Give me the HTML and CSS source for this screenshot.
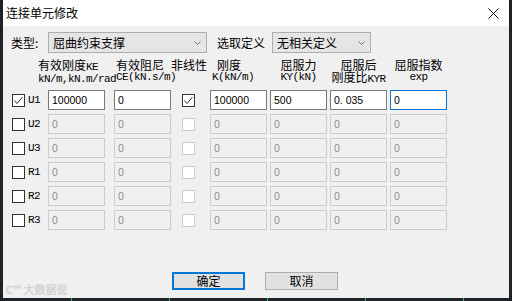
FILE: index.html
```html
<!DOCTYPE html>
<html lang="zh-CN">
<head>
    <meta charset="UTF-8">
    <title>连接单元修改</title>
    <link rel="stylesheet" href="styles.css">
</head>
<body>
    <div class="window">
        <div class="titlebar">
            <span class="title">连接单元修改</span>
            <svg class="close" width="11" height="11" viewBox="0 0 11 11">
                <path d="M0.5 0.5 L10.5 10.5 M10.5 0.5 L0.5 10.5" stroke="#111" stroke-width="1"/>
            </svg>
        </div>

        <div class="client">
            <div class="toprow">
                <span class="lbl-type">类型:</span>
                <div class="combo combo-type">
                    <span>屈曲约束支撑</span>
                    <svg class="arrow" width="7" height="4" viewBox="0 0 7 4"><path d="M0.5 0.5 L3.5 3.5 L6.5 0.5" fill="none" stroke="#707070"/></svg>
                </div>
                <span class="lbl-def">选取定义</span>
                <div class="combo combo-def">
                    <span>无相关定义</span>
                    <svg class="arrow" width="7" height="4" viewBox="0 0 7 4"><path d="M0.5 0.5 L3.5 3.5 L6.5 0.5" fill="none" stroke="#707070"/></svg>
                </div>
            </div>

            <!-- en-têtes des colonnes -->
            <div class="cols hdr">
                <div class="h h-ke">
                    <div>有效刚度<span class="m">KE</span></div>
                    <div class="m">kN/m,kN.m/rad</div>
                </div>
                <div></div>
                <div class="h h-ce">
                    <div>有效阻尼</div>
                    <div class="m">CE(kN.s/m)</div>
                </div>
                <div class="h">
                    <div>非线性</div>
                </div>
                <div class="h h-k">
                    <div class="k1">刚度</div>
                    <div class="m k2">K(kN/m)</div>
                </div>
                <div class="h h-c">
                    <div>屈服力</div>
                    <div class="m">KY(kN)</div>
                </div>
                <div class="h h-c">
                    <div>屈服后</div>
                    <div>刚度比<span class="m">KYR</span></div>
                </div>
                <div class="h h-c">
                    <div>屈服指数</div>
                    <div class="m">exp</div>
                </div>
            </div>

            <div class="cols rows">
                <div class="dof"><span class="chk"><svg width="11" height="11" viewBox="0 0 11 11"><path d="M1.5 5.5 L4 8.5 L9.5 2" fill="none" stroke="#333"/></svg></span><span class="dof-name">U1</span></div>
                <div><input class="field" value="100000"></div>
                <div><input class="field" value="0"></div>
                <div><span class="chk nl"><svg width="11" height="11" viewBox="0 0 11 11"><path d="M1.5 5.5 L4 8.5 L9.5 2" fill="none" stroke="#333"/></svg></span></div>
                <div><input class="field" value="100000"></div>
                <div><input class="field" value="500"></div>
                <div><input class="field" value="0. 035"></div>
                <div><input class="field focus" value="0" autofocus></div>

                <div class="dof"><span class="chk"></span><span class="dof-name">U2</span></div>
                <div><input class="field" value="0" disabled></div>
                <div><input class="field" value="0" disabled></div>
                <div><span class="chk nl off"></span></div>
                <div><input class="field" value="0" disabled></div>
                <div><input class="field" value="0" disabled></div>
                <div><input class="field" value="0" disabled></div>
                <div><input class="field" value="0" disabled></div>

                <div class="dof"><span class="chk"></span><span class="dof-name">U3</span></div>
                <div><input class="field" value="0" disabled></div>
                <div><input class="field" value="0" disabled></div>
                <div><span class="chk nl off"></span></div>
                <div><input class="field" value="0" disabled></div>
                <div><input class="field" value="0" disabled></div>
                <div><input class="field" value="0" disabled></div>
                <div><input class="field" value="0" disabled></div>

                <div class="dof"><span class="chk"></span><span class="dof-name">R1</span></div>
                <div><input class="field" value="0" disabled></div>
                <div><input class="field" value="0" disabled></div>
                <div><span class="chk nl off"></span></div>
                <div><input class="field" value="0" disabled></div>
                <div><input class="field" value="0" disabled></div>
                <div><input class="field" value="0" disabled></div>
                <div><input class="field" value="0" disabled></div>

                <div class="dof"><span class="chk"></span><span class="dof-name">R2</span></div>
                <div><input class="field" value="0" disabled></div>
                <div><input class="field" value="0" disabled></div>
                <div><span class="chk nl off"></span></div>
                <div><input class="field" value="0" disabled></div>
                <div><input class="field" value="0" disabled></div>
                <div><input class="field" value="0" disabled></div>
                <div><input class="field" value="0" disabled></div>

                <div class="dof"><span class="chk"></span><span class="dof-name">R3</span></div>
                <div><input class="field" value="0" disabled></div>
                <div><input class="field" value="0" disabled></div>
                <div><span class="chk nl off"></span></div>
                <div><input class="field" value="0" disabled></div>
                <div><input class="field" value="0" disabled></div>
                <div><input class="field" value="0" disabled></div>
                <div><input class="field" value="0" disabled></div>
            </div>

            <div class="buttons">
                <button class="btn default">确定</button>
                <button class="btn">取消</button>
            </div>

            <div class="watermark">C°° 大数据说</div>
        </div>
    </div>
</body>
</html>
```

FILE: styles.css
```css
* {
    box-sizing: border-box;
}
body {
    margin: 0;
    height: 301px;
    background-color: #1e2126;
    background-image: repeating-linear-gradient(90deg, transparent 0 71px, #2fa8a0 71px 72px, transparent 72px 98px);
    font-family: "Noto Sans CJK SC", sans-serif;
    font-size: 12px;
    color: #000;
}
.window {
    margin: 0 3px;
    height: 298px;
    background-color: #f0f0f0;
    display: flex;
    flex-direction: column;
}
.titlebar {
    height: 26px;
    background-color: #fff;
    display: flex;
    align-items: center;
    justify-content: space-between;
    padding-left: 3px;
}
.title {
    font-size: 12px;
    line-height: 1;
}
.close {
    display: block;
    margin-right: 10px;
}
.client {
    position: relative;
    flex: 1;
    padding-top: 6px;
}
.toprow {
    display: flex;
    align-items: center;
    height: 21px;
    padding-left: 8px;
}
.lbl-type {
    width: 37px;
}
.lbl-def {
    width: 55px;
    margin-left: 10px;
}
.combo {
    height: 21px;
    border: 1px solid #adadad;
    background-color: #e5e5e5;
    display: flex;
    align-items: center;
    justify-content: space-between;
    padding: 0 5px 0 4px;
}
.combo-type {
    width: 159px;
}
.combo-def {
    width: 99px;
}
.arrow {
    display: block;
}
.cols {
    display: grid;
    grid-template-columns: 36px 66px 57px 39px 60px 60px 60px 57px;
    margin-left: 9px;
}
.hdr {
    margin-top: 6px;
    height: 24px;
    line-height: 12px;
}
.h {
    white-space: nowrap;
}
.m {
    font-family: "Liberation Mono", monospace;
    font-size: 11px;
    letter-spacing: -0.6px;
}
.h-ke {
    padding-left: 26px;
}
.h-ce {
    padding-left: 2px;
}
.h-k .k1 {
    padding-left: 7px;
}
.h-k .k2 {
    padding-left: 2px;
}
.h-c {
    width: 57px;
    text-align: center;
}
.rows {
    margin-top: 7px;
    row-gap: 4px;
}
.rows > div {
    height: 20px;
}
.dof {
    display: flex;
    align-items: flex-start;
}
.dof-name {
    margin-left: 3px;
    font-family: "Liberation Mono", monospace;
    font-size: 11px;
    letter-spacing: -0.6px;
    line-height: 21px;
}
.chk {
    display: block;
    width: 13px;
    height: 13px;
    margin-top: 4px;
    border: 1px solid #333;
    background-color: #fff;
}
.chk svg {
    display: block;
}
.chk.nl {
    margin-left: 11px;
}
.chk.off {
    border-color: #cccccc;
}
.field {
    display: block;
    width: 57px;
    height: 20px;
    margin: 0;
    padding: 0 3px;
    border: 1px solid #7a7a7a;
    border-radius: 0;
    background-color: #fff;
    font-family: "Liberation Sans", Arial, sans-serif;
    font-size: 10.5px;
    color: #000;
    outline: none;
}
.field:disabled {
    background-color: #f0f0f0;
    border-color: #cccccc;
    color: #8d8d8d;
}
.field.focus {
    border-color: #0078d7;
}
.buttons {
    display: flex;
    gap: 20px;
    margin-top: 42px;
    padding-left: 169px;
}
.btn {
    width: 73px;
    height: 18px;
    padding: 0;
    border: 1px solid #adadad;
    background-color: #e1e1e1;
    font-family: "Noto Sans CJK SC", sans-serif;
    font-size: 12px;
    line-height: 14px;
    color: #000;
}
.btn.default {
    border: 2px solid #0078d7;
}
.watermark {
    position: absolute;
    left: 3px;
    bottom: 1px;
    font-size: 11px;
    color: #d9d9d9;
    text-shadow: 0 0 1px #bbb;
}
```
